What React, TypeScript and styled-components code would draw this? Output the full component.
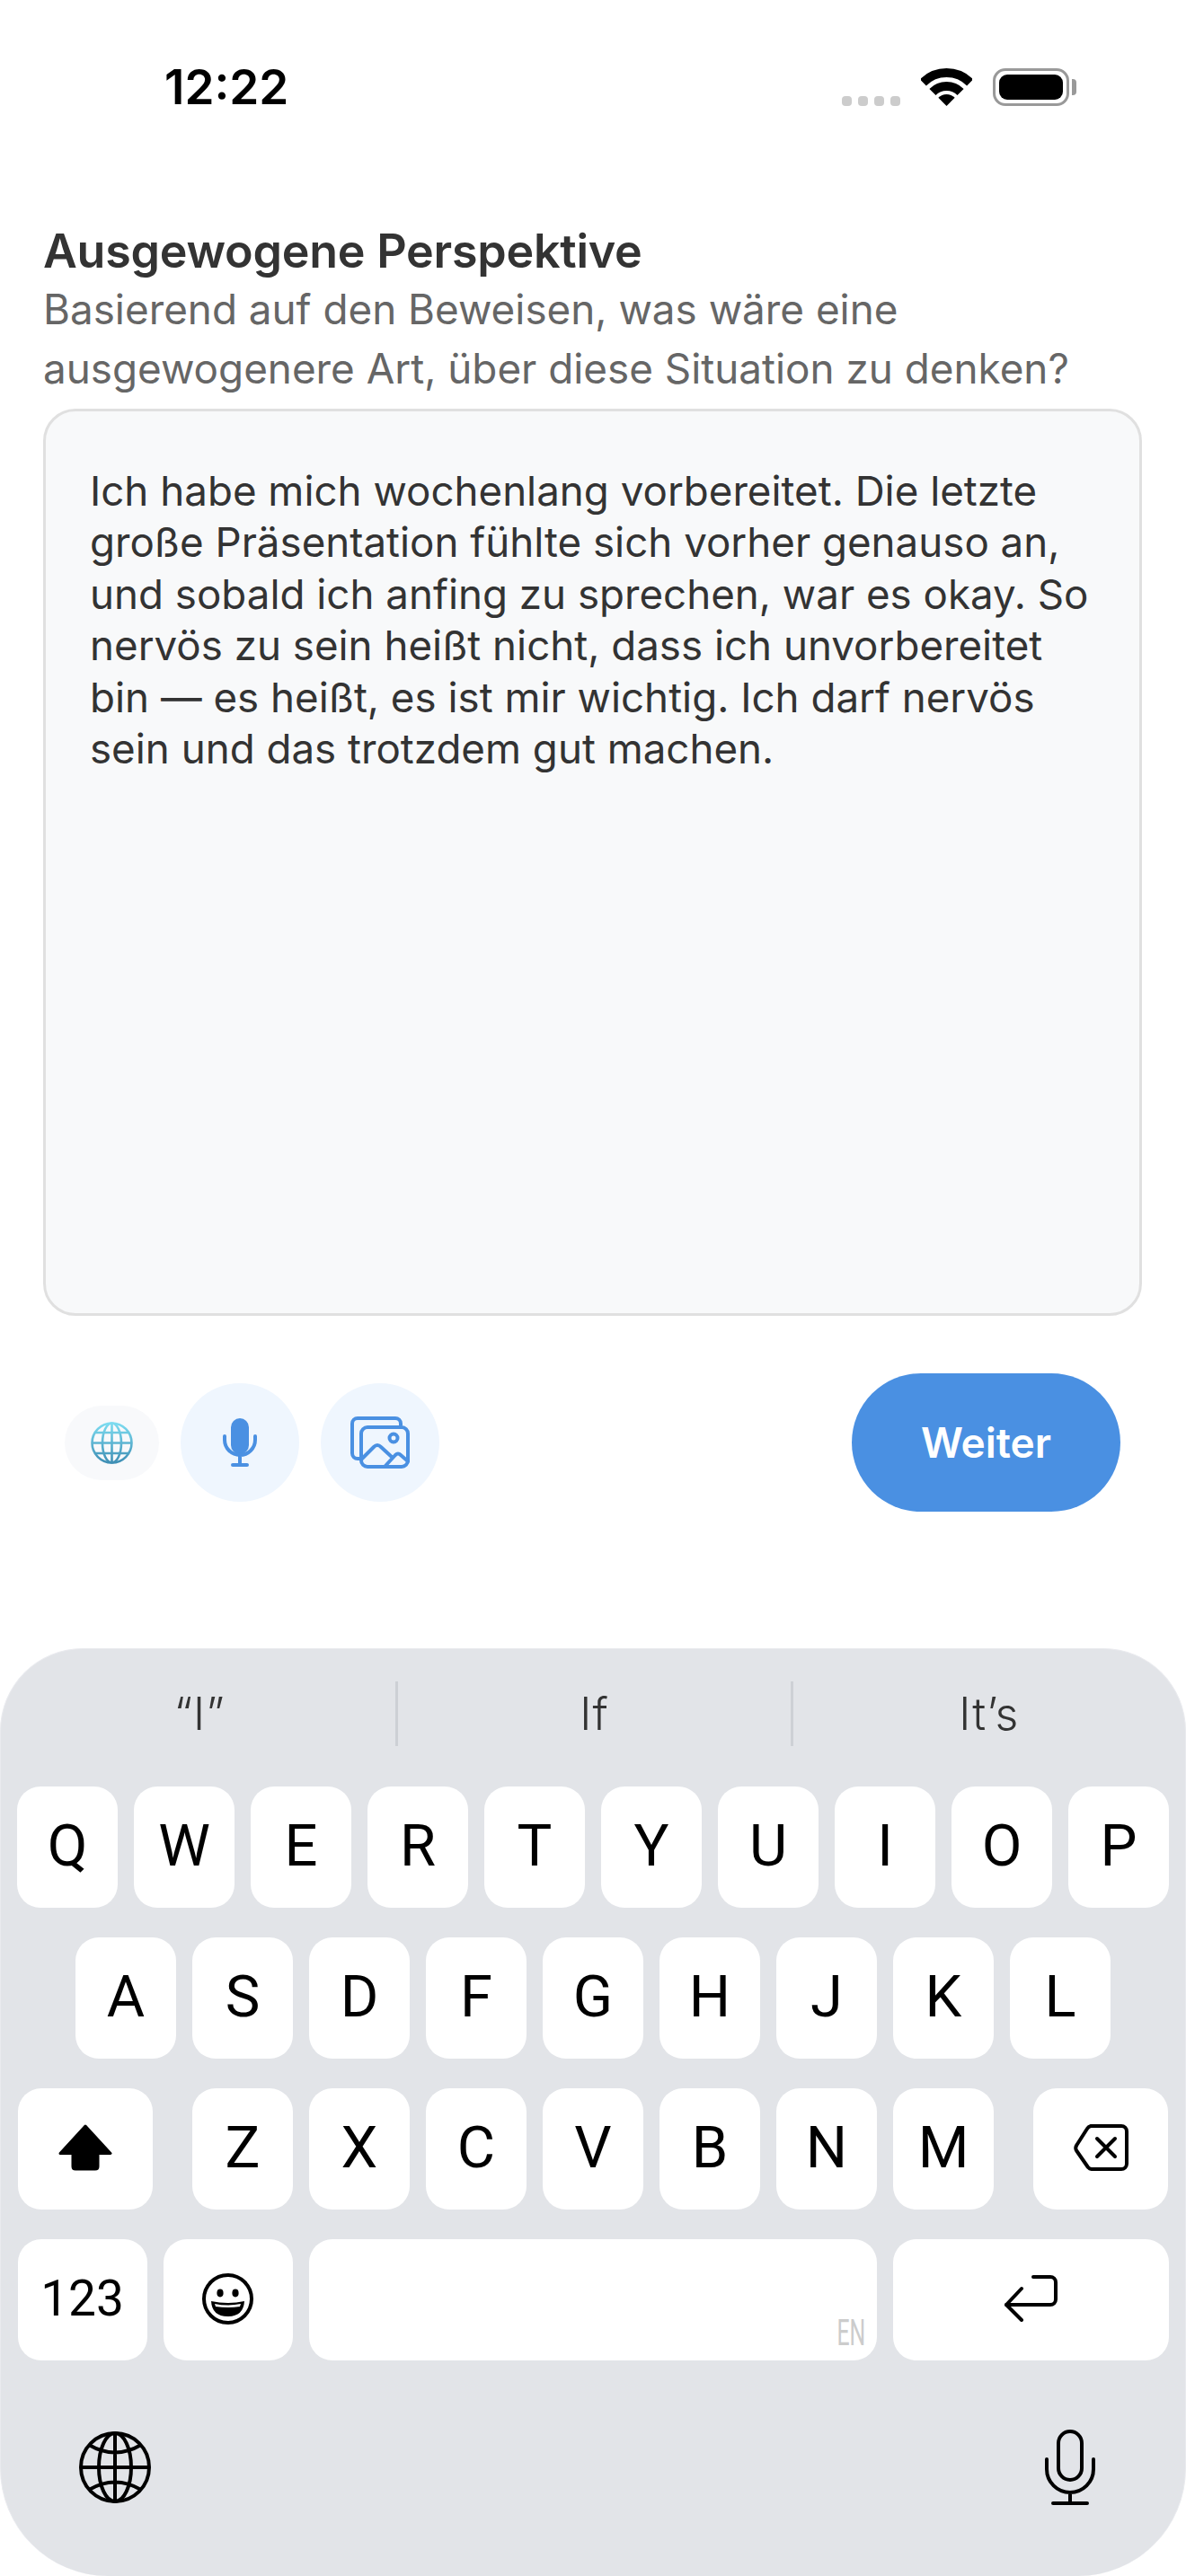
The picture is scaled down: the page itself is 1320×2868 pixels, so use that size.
import React from 'react';
import styled, { createGlobalStyle } from 'styled-components';

const ROWS = {
  top: ['Q', 'W', 'E', 'R', 'T', 'Y', 'U', 'I', 'O', 'P'],
  middle: ['A', 'S', 'D', 'F', 'G', 'H', 'J', 'K', 'L'],
  bottom: ['Z', 'X', 'C', 'V', 'B', 'N', 'M'],
};

const App = function App() {
  return (
    <Page>
      <GlobalStyle />
      <StatusBar>
        <Time>12:22</Time>
        <StatusIcons>
          <SignalDots>
            <SignalDot />
            <SignalDot />
            <SignalDot />
            <SignalDot />
          </SignalDots>
          <svg width="57" height="42" viewBox="0 0 57 42">
            <path d="M2.34 15.84A37 37 0 0 1 54.66 15.84" fill="none" stroke="#000" strokeWidth="10" />
            <path d="M12.94 26.44A22 22 0 0 1 44.06 26.44" fill="none" stroke="#000" strokeWidth="10" />
            <path d="M28.5 42L19.31 32.81A13 13 0 0 1 37.69 32.81Z" fill="#000" />
          </svg>
          <Battery>
            <BatteryFill />
          </Battery>
        </StatusIcons>
      </StatusBar>

      <Content>
        <Title>Ausgewogene Perspektive</Title>
        <Subtitle>
          Basierend auf den Beweisen, was wäre eine
          <br />
          ausgewogenere Art, über diese Situation zu denken?
        </Subtitle>
        <AnswerBox>
          Ich habe mich wochenlang vorbereitet. Die letzte
          <br />
          große Präsentation fühlte sich vorher genauso an,
          <br />
          und sobald ich anfing zu sprechen, war es okay. So
          <br />
          nervös zu sein heißt nicht, dass ich unvorbereitet
          <br />
          bin — es heißt, es ist mir wichtig. Ich darf nervös
          <br />
          sein und das trotzdem gut machen.
        </AnswerBox>
      </Content>

      <Actions>
        <ActionIcons>
          <LanguagePill>
            <svg width="47" height="47" viewBox="0 0 47 47" fill="none">
              <defs>
                <linearGradient id="globeBlue" x1="0" y1="0" x2="0" y2="1">
                  <stop offset="0" stopColor="#7ddcf0" />
                  <stop offset="1" stopColor="#3f8fb5" />
                </linearGradient>
              </defs>
              <g stroke="url(#globeBlue)" strokeWidth="2.6">
                <circle cx="23.5" cy="23.5" r="22" />
                <ellipse cx="23.5" cy="23.5" rx="10.5" ry="22" />
                <path d="M23.5 1.5V45.5M1.5 23.5H45.5M5 12H42M5 35H42" />
              </g>
            </svg>
          </LanguagePill>
          <RoundAction>
            <svg width="38" height="54" viewBox="0 0 38 54" fill="none">
              <rect x="9" y="0" width="20" height="40" rx="10" fill="#4a90e2" />
              <path
                d="M2 20V24A17 17 0 0 0 36 24V20M19 41V52M11 52H27"
                stroke="#4a90e2"
                strokeWidth="4"
                strokeLinecap="round"
              />
            </svg>
          </RoundAction>
          <RoundAction>
            <svg width="66" height="58" viewBox="0 0 66 58" fill="none" stroke="#4a90e2" strokeWidth="4" strokeLinejoin="round">
              <path d="M56 10V8A6 6 0 0 0 50 2H8A6 6 0 0 0 2 8V41A6 6 0 0 0 8 47H11" />
              <rect x="12" y="12" width="52" height="44" rx="7" />
              <circle cx="48" cy="24" r="4.5" />
              <path d="M13 47L26 34Q30 30 34 34L47 46M38 56L50 43Q53 40 56 43L64 50" strokeLinecap="round" />
            </svg>
          </RoundAction>
        </ActionIcons>
        <NextButton>Weiter</NextButton>
      </Actions>

      <Keyboard>
        <Suggestions>
          <Suggestion>“I”</Suggestion>
          <Suggestion $divided>If</Suggestion>
          <Suggestion $divided>It’s</Suggestion>
        </Suggestions>
        <KeyRows>
          <KeyRow>
            {ROWS.top.map((letter) => (
              <Key key={letter}>{letter}</Key>
            ))}
          </KeyRow>
          <KeyRow>
            {ROWS.middle.map((letter) => (
              <Key key={letter}>{letter}</Key>
            ))}
          </KeyRow>
          <KeyRow>
            <ShiftKey $width={150}>
              <svg width="60" height="52" viewBox="0 0 60 52">
                <path
                  d="M30 2L58 32.5H44V47Q44 50 41 50H19Q16 50 16 47V32.5H2Z"
                  fill="#000"
                  stroke="#000"
                  strokeWidth="3"
                  strokeLinejoin="round"
                />
              </svg>
            </ShiftKey>
            {ROWS.bottom.map((letter) => (
              <Key key={letter}>{letter}</Key>
            ))}
            <DeleteKey $width={150}>
              <svg width="61" height="52" viewBox="0 0 61 52" fill="none" stroke="#000" strokeWidth="4" strokeLinecap="round" strokeLinejoin="round">
                <path d="M19 2H53A6 6 0 0 1 59 8V44A6 6 0 0 1 53 50H21A6 6 0 0 1 16 48L3.5 30A6 6 0 0 1 3.5 23L15 5A6 6 0 0 1 19 2Z" />
                <path d="M26 16L46 36M46 16L26 36" />
              </svg>
            </DeleteKey>
          </KeyRow>
          <KeyRow>
            <NumberKey $width={144}>123</NumberKey>
            <Key $width={144}>
              <svg width="57" height="57" viewBox="0 0 57 57" fill="none">
                <circle cx="28.5" cy="28.5" r="26.5" stroke="#000" strokeWidth="4" />
                <ellipse cx="20" cy="22" rx="3.6" ry="4.4" fill="#000" />
                <ellipse cx="37" cy="22" rx="3.6" ry="4.4" fill="#000" />
                <path d="M10 31Q28.5 35 47 31Q46 48 28.5 48Q11 48 10 31Z" fill="#000" />
                <path d="M14 34Q28.5 37 43 34L42 37Q28.5 39 15 37Z" fill="#fff" />
              </svg>
            </Key>
            <SpaceKey $width={632}>
              <SpaceLabel>EN</SpaceLabel>
            </SpaceKey>
            <Key $width={307}>
              <svg width="60" height="52" viewBox="0 0 60 52" fill="none" stroke="#000" strokeWidth="4" strokeLinecap="round" strokeLinejoin="round">
                <path d="M33 2H52A6 6 0 0 1 58 8V27A6 6 0 0 1 52 33H3" />
                <path d="M20 15L3 33L20 50" />
              </svg>
            </Key>
          </KeyRow>
        </KeyRows>
        <KeyboardFooter>
          <svg width="80" height="80" viewBox="0 0 80 80" fill="none" stroke="#000" strokeWidth="4">
            <circle cx="40" cy="40" r="38" />
            <ellipse cx="40" cy="40" rx="18" ry="38" />
            <path d="M40 2V78M2 40H78M11 15Q40 32 69 15M11 65Q40 48 69 65" />
          </svg>
          <svg width="56" height="84" viewBox="0 0 56 84" fill="none" stroke="#000" strokeWidth="4" strokeLinecap="round">
            <rect x="15" y="2" width="26" height="54" rx="13" />
            <path d="M2 33V44A26 26 0 0 0 54 44V33M28 70V82M9 82H47" />
          </svg>
        </KeyboardFooter>
      </Keyboard>
    </Page>
  );
};

const GlobalStyle = createGlobalStyle`
  html,
  body {
    margin: 0;
    padding: 0;
    background: #fff;
  }
`;

const Page = styled.div`
  display: flex;
  flex-direction: column;
  width: 1320px;
  height: 2868px;
  overflow: hidden;
  background: #fff;
  font-family: Inter, 'Liberation Sans', sans-serif;
`;

const StatusBar = styled.div`
  display: flex;
  align-items: center;
  justify-content: space-between;
  box-sizing: border-box;
  height: 130px;
  padding: 64px 130px 0 183px;
`;

const Time = styled.div`
  font-size: 53px;
  font-weight: 600;
  line-height: 66px;
  color: #000;
`;

const StatusIcons = styled.div`
  display: flex;
  align-items: flex-end;
  gap: 23px;
`;

const SignalDots = styled.div`
  display: flex;
  gap: 7px;
`;

const SignalDot = styled.span`
  width: 11px;
  height: 11px;
  border-radius: 4px;
  background: #ccc;
`;

const Battery = styled.div`
  position: relative;
  box-sizing: border-box;
  width: 85px;
  height: 42px;
  padding: 4px;
  border: 3px solid #999;
  border-radius: 14px;

  &::after {
    content: '';
    position: absolute;
    top: 9px;
    right: -11px;
    width: 5px;
    height: 18px;
    border-radius: 0 4px 4px 0;
    background: #999;
  }
`;

const BatteryFill = styled.div`
  height: 100%;
  border-radius: 9px;
  background: #000;
`;

const Content = styled.div`
  display: flex;
  flex-direction: column;
  padding: 117px 49px 0 48px;
`;

const Title = styled.div`
  font-size: 52px;
  font-weight: 600;
  line-height: 66px;
  letter-spacing: -0.25px;
  color: #333;
`;

const Subtitle = styled.div`
  margin-top: -1px;
  font-size: 45.8px;
  line-height: 66px;
  color: #666;
`;

const AnswerBox = styled.div`
  box-sizing: border-box;
  height: 1010px;
  margin-top: 11px;
  padding: 60px 49px;
  border: 3px solid #e0e0e0;
  border-radius: 36px;
  background: #f8f9fa;
  font-size: 45.7px;
  line-height: 57.4px;
  color: #333;
`;

const Actions = styled.div`
  display: flex;
  align-items: center;
  justify-content: space-between;
  margin-top: 64px;
  padding: 0 73px 0 72px;
`;

const ActionIcons = styled.div`
  display: flex;
  align-items: center;
  gap: 24px;
`;

const LanguagePill = styled.div`
  display: flex;
  align-items: center;
  justify-content: center;
  width: 105px;
  height: 83px;
  border-radius: 42px;
  background: #f8f9fb;
`;

const RoundAction = styled.div`
  display: flex;
  align-items: center;
  justify-content: center;
  width: 132px;
  height: 132px;
  border-radius: 50%;
  background: #eff6fe;
`;

const NextButton = styled.div`
  display: flex;
  align-items: center;
  justify-content: center;
  width: 299px;
  height: 154px;
  border-radius: 77px;
  background: #4a90e2;
  font-size: 46px;
  font-weight: 600;
  color: #fff;
`;

const Keyboard = styled.div`
  display: flex;
  flex-direction: column;
  box-sizing: border-box;
  height: 1033px;
  margin-top: auto;
  padding-top: 36px;
  border: 1px solid #eaebef;
  border-bottom: 0;
  border-radius: 92px 92px 120px 120px;
  background: #e2e4e8;
  font-family: Roboto, 'Liberation Sans', sans-serif;
  color: #000;
`;

const Suggestions = styled.div`
  display: flex;
  height: 72px;
`;

const Suggestion = styled.div<{ $divided?: boolean }>`
  display: flex;
  flex: 1;
  align-items: center;
  justify-content: center;
  border-left: ${(props) => (props.$divided ? '3px solid #cdd0d5' : '3px solid transparent')};
  font-family: Inter, 'Liberation Sans', sans-serif;
  font-size: 50px;
  font-weight: 300;
  letter-spacing: 1px;
  color: #333;
`;

const KeyRows = styled.div`
  display: flex;
  flex-direction: column;
  gap: 33px;
  margin-top: 45px;
`;

const KeyRow = styled.div`
  display: flex;
  justify-content: center;
  gap: 18px;
`;

const Key = styled.div<{ $width?: number }>`
  display: flex;
  align-items: center;
  justify-content: center;
  box-sizing: border-box;
  width: ${(props) => props.$width ?? 112}px;
  height: 135px;
  padding-bottom: 3px;
  border-radius: 26px;
  background: #fff;
  font-size: 65px;
  font-weight: 400;
`;

const ShiftKey = styled(Key)`
  margin-right: 26px;
`;

const DeleteKey = styled(Key)`
  margin-left: 26px;
`;

const NumberKey = styled(Key)`
  font-size: 55px;
`;

const SpaceKey = styled(Key)`
  position: relative;
`;

const SpaceLabel = styled.span`
  position: absolute;
  right: 12px;
  bottom: 10px;
  font-size: 40px;
  font-weight: 400;
  line-height: 40px;
  color: #ccc;
  transform: scaleX(0.62);
  transform-origin: right center;
`;

const KeyboardFooter = styled.div`
  display: flex;
  align-items: center;
  justify-content: space-between;
  margin-top: 77px;
  padding: 0 100px 0 87px;
`;

export default App;
